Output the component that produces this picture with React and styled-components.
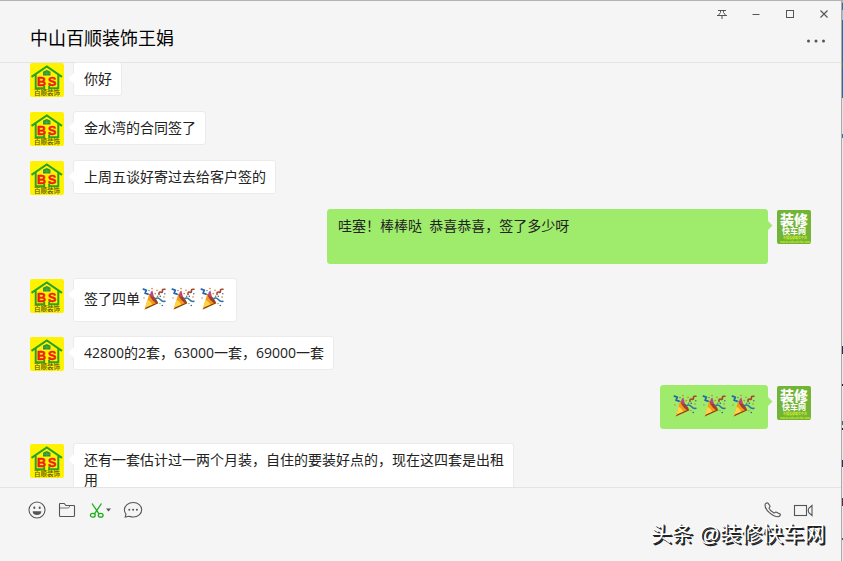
import React from 'react';
import styled, { createGlobalStyle } from 'styled-components';

const GlobalStyle = createGlobalStyle`
  * {
    box-sizing: border-box;
  }

  body {
    margin: 0;
    background: #f5f5f5;
    color: #222;
    font-family: 'Open Sans', 'Noto Sans CJK SC', sans-serif;
    font-size: 14px;
    line-height: 20px;
  }
`;

const Desktop = styled.div`
  display: flex;
  height: 100vh;
  overflow: hidden;
`;

const Window = styled.main`
  position: relative;
  flex: 1;
  min-width: 0;
  display: flex;
  flex-direction: column;
  background: #f5f5f5;
  border-top: 1px solid #b4b2b3;
  border-right: 1px solid #a9a9a9;
`;

// sliver of the window that sits behind the chat
const Behind = styled.div`
  width: 1px;
  background: linear-gradient(
    #b0b0b0 3px, #1b79b0 3px 10px, #8fc4de 10px 20px, #1273ad 20px 62px,
    #35806f 62px 68px, #1273b4 68px 98px, #e4e4e4 98px 134px,
    #1b82b0 134px 138px, #e9e9e9 138px 346px, #23305c 346px 354px,
    #e9e9e9 354px 384px, #222 384px 386px, #e9e9e9 386px 421px,
    #1f7a70 421px 425px, #e9e9e9 425px 428px, #222 428px 430px,
    #e9e9e9 430px 460px, #23305c 460px 467px, #e9e9e9 467px 498px,
    #6b2440 498px 506px, #e9e9e9 506px 538px, #1f6a60 538px 540px,
    #e9e9e9 540px
  );
`;

const Header = styled.header`
  flex: none;
  border-bottom: 1px solid #e4e4e4;
`;

const WindowControls = styled.div`
  display: flex;
  justify-content: flex-end;
`;

const IconButton = styled.button`
  display: flex;
  align-items: center;
  justify-content: center;
  width: ${(props) => props.$width || 20}px;
  height: ${(props) => props.$height || 20}px;
  padding: 0;
  border: 0;
  background: none;
  color: #555;

  svg {
    display: block;
    flex: none;
  }
`;

const TitleRow = styled.div`
  display: flex;
  align-items: flex-start;
  justify-content: space-between;
  height: 35px;
  padding: 0 8px 0 30px;
`;

const Title = styled.h1`
  margin: 0;
  color: #000;
  font-size: 18px;
  font-weight: 400;
  line-height: 22px;
`;

const Messages = styled.ul`
  flex: 1;
  min-height: 0;
  display: flex;
  flex-direction: column;
  gap: 14px;
  margin: -1px 0 0;
  padding: 0 30px;
  overflow: hidden;
  list-style: none;
`;

const Message = styled.li`
  flex: none;
  display: flex;
  flex-direction: ${(props) => (props.$mine ? 'row-reverse' : 'row')};
  align-items: flex-start;
  gap: 9px;
`;

const Avatar = styled.svg`
  flex: none;
  display: block;
  width: 34px;
  height: 34px;
  margin-top: 1px;
  border-radius: 2px;
`;

const Bubble = styled.div`
  position: relative;
  display: flex;
  align-items: flex-start;
  max-width: 441px;
  width: ${(props) => (props.$wide ? '441px' : 'auto')};
  min-height: ${(props) => (props.$wide ? 55 : 34)}px;
  padding: 6px 9px 6px 10px;
  border: 1px solid ${(props) => (props.$mine ? '#9feb6b' : '#ebebeb')};
  border-radius: 3px;
  background: ${(props) => (props.$mine ? '#9feb6b' : '#fff')};

  &::before {
    content: '';
    position: absolute;
    top: 12px;
    ${(props) => (props.$mine ? 'right' : 'left')}: -4px;
    width: 7px;
    height: 7px;
    background: inherit;
    transform: rotate(45deg);
  }
`;

const Text = styled.p`
  position: relative;
  margin: 0;
  white-space: pre-wrap;
  line-height: ${(props) => (props.$tall ? 28 : 20)}px;
`;

const Emoji = styled.svg`
  flex: none;
  display: block;
  position: relative;
  width: 29px;
  height: 30px;
`;

const Footer = styled.footer`
  flex: none;
  border-top: 1px solid #e4e4e4;
`;

const Toolbar = styled.div`
  display: flex;
  align-items: center;
  gap: 10px;
  height: 44px;
  padding: 0 28px 0 27px;
`;

const Spacer = styled.span`
  flex: 1;
`;

const MessageBox = styled.textarea`
  display: block;
  width: 100%;
  height: 29px;
  padding: 0 30px;
  border: 0;
  outline: 0;
  resize: none;
  background: transparent;
  font: inherit;
`;

const Watermark = styled.div`
  position: absolute;
  right: 16px;
  bottom: 13px;
  color: #fff;
  font-family: 'Liberation Sans', 'Noto Sans CJK SC', sans-serif;
  font-size: 21px;
  line-height: 28px;
  text-shadow: 1px 1px 0 #222, 2px 2px 0 #222;
  pointer-events: none;
`;

function HouseAvatar() {
  return (
    <Avatar viewBox="0 0 34 34" aria-hidden="true">
      <rect width="34" height="34" fill="#fff200" />
      <path
        d="M1.5 13.8 L16.8 3.4 L32 13.8 M5.7 11.5 V25.2 H14.2 V22.5 M28.3 11.5 V25.2 H19.2 V22.5"
        fill="none"
        stroke="#27a329"
        strokeWidth="2"
      />
      <path d="M13 8.8 L16.8 7 L20.5 8.8 V12.5 H13Z" fill="#2d8f3d" />
      <path d="M16.8 8 V12 M13.5 10.2 H20" stroke="#5fbd44" strokeWidth="0.6" />
      <g
        fill="#ee1c10"
        stroke="#ee1c10"
        strokeWidth="0.5"
        fontFamily="Liberation Sans, sans-serif"
        fontSize="12.5"
        fontWeight="700"
      >
        <text x="7" y="22.8">B</text>
        <text x="18" y="22.8">S</text>
      </g>
      <text x="4" y="31.8" fill="#5b5208" fontFamily="Noto Sans CJK SC, sans-serif" fontSize="6.5" fontWeight="500">
        百顺装饰
      </text>
    </Avatar>
  );
}

function TruckAvatar() {
  return (
    <Avatar viewBox="0 0 34 34" aria-hidden="true">
      <rect width="34" height="34" fill="#72b436" />
      <g fontFamily="Noto Sans CJK SC, sans-serif" fontWeight="700">
        <text x="3" y="14.8" fill="#fff" fontSize="14" fontWeight="900">装修</text>
        <text x="5" y="23.8" fill="#fff" fontSize="8">快车网</text>
        <text x="6" y="29" fill="#d3ee2f" fontSize="3">中国装修服务平台</text>
        <text x="3" y="33" fill="#c8e62c" fontSize="3">www.zxkuaiche.com</text>
      </g>
    </Avatar>
  );
}

function Popper() {
  return (
    <Emoji viewBox="0 1 29 30" role="img" aria-label="庆祝">
      <path d="M4.6 25.5 L9.4 9.8 Q14.5 12.5 18.3 19.3 Z" fill="#f39a17" />
      <path d="M4.6 25.5 L7.6 15.5 Q11.5 18 13 21.6 Z" fill="#ffd24a" />
      <path d="M9.4 9.8 Q15 11.5 18.3 19.3 Q15.8 19.6 12.8 16.4 Q9.6 13.2 9.4 9.8Z" fill="#a33d2a" />
      <path d="M4.6 25.5 L18.3 19.3 L16.4 18.9 L6 23.4Z" fill="#7a3d0b" />
      <path d="M10.5 12.6 Q9.5 8 12.4 6.6 L14 13Z" fill="#b9477f" />
      <g fill="none" strokeLinecap="round">
        <path d="M3.4 5.2 L6.2 6.2 L5.2 9.2 L8 10.2" stroke="#2565ab" strokeWidth="1.8" />
        <path d="M15 14.8 Q18 12.8 20.3 15.4 T25 17.2" stroke="#2f73a8" strokeWidth="1.5" />
        <path d="M19 10.5 Q18.6 7.2 21 8.2 Q22.8 9 22.4 6.8 Q22 5 25 5.2" stroke="#a5432f" strokeWidth="1.6" />
      </g>
      <g fill="#d08018">
        <circle cx="12" cy="4.6" r="0.8" />
        <circle cx="17" cy="6.2" r="0.8" />
        <circle cx="15.2" cy="9.6" r="0.8" />
        <circle cx="24" cy="13" r="0.8" />
        <circle cx="4" cy="14" r="0.7" />
      </g>
      <g fill="#2d5f90">
        <circle cx="9" cy="6.6" r="0.7" />
        <circle cx="20.3" cy="12.3" r="0.8" />
        <circle cx="22.3" cy="21.5" r="0.8" />
        <circle cx="24.8" cy="9.7" r="0.7" />
      </g>
      <g fill="#6a9a38">
        <circle cx="17.6" cy="12.4" r="0.8" />
        <circle cx="20" cy="19.6" r="0.7" />
      </g>
    </Emoji>
  );
}

function PinIcon() {
  return (
    <svg width="12" height="12" viewBox="0 0 12 12" fill="none" stroke="currentColor">
      <path d="M2 2.5 H10 M1 7.5 H11 M4.5 2.5 V4.5 L2.5 7.2 M7.5 2.5 V4.5 L9.5 7.2 M6 7.5 V11" />
    </svg>
  );
}

function MinimizeIcon() {
  return (
    <svg width="10" height="10" viewBox="0 0 10 10" stroke="currentColor">
      <path d="M1.5 5.5 H8.5" />
    </svg>
  );
}

function MaximizeIcon() {
  return (
    <svg width="10" height="10" viewBox="0 0 10 10" fill="none" stroke="currentColor">
      <rect x="1.5" y="1.5" width="7" height="7" />
    </svg>
  );
}

function CloseIcon() {
  return (
    <svg width="10" height="10" viewBox="0 0 10 10" stroke="currentColor" strokeWidth="1.2">
      <path d="M1.5 1.5 L8.5 8.5 M8.5 1.5 L1.5 8.5" />
    </svg>
  );
}

function MoreIcon() {
  return (
    <svg width="20" height="4" viewBox="0 0 20 4" fill="currentColor">
      <circle cx="2.5" cy="2" r="1.5" />
      <circle cx="10" cy="2" r="1.5" />
      <circle cx="17.5" cy="2" r="1.5" />
    </svg>
  );
}

function SmileIcon() {
  return (
    <svg width="18" height="18" viewBox="0 0 18 18">
      <circle cx="9" cy="9" r="8" fill="none" stroke="currentColor" strokeWidth="1.1" />
      <ellipse cx="6.3" cy="6.8" rx="1" ry="1.3" fill="currentColor" />
      <ellipse cx="11.7" cy="6.8" rx="1" ry="1.3" fill="currentColor" />
      <path d="M4.7 10.2 H13.3 A4.3 3.8 0 0 1 4.7 10.2Z" fill="currentColor" />
    </svg>
  );
}

function FolderIcon() {
  return (
    <svg width="18" height="18" viewBox="0 0 18 18" fill="none" stroke="currentColor" strokeWidth="1.1">
      <path d="M1.5 14.5 V3 Q1.5 2.5 2 2.5 H6.2 L8 4.5 H16 Q16.5 4.5 16.5 5 V14.5 Q16.5 15.5 15.5 15.5 H2.5 Q1.5 15.5 1.5 14.5Z" />
      <path d="M1.5 7 H10.5 L12 4.8" strokeWidth="0.8" />
    </svg>
  );
}

function ScissorsIcon() {
  return (
    <svg width="26" height="18" viewBox="0 0 26 18" fill="none">
      <g stroke="#1aad19" strokeWidth="1.3">
        <path d="M5 2.5 L12 12.8 M14.5 2.5 L7.5 12.8" />
        <ellipse cx="5.8" cy="14.2" rx="2.4" ry="1.9" />
        <ellipse cx="13.7" cy="14.2" rx="2.4" ry="1.9" />
      </g>
      <path d="M19 7.5 H24 L21.5 10.5Z" fill="#555" />
    </svg>
  );
}

function HistoryIcon() {
  return (
    <svg width="20" height="18" viewBox="0 0 20 18" fill="currentColor">
      <path
        d="M10.2 1.5 C15 1.5 18.7 4.6 18.7 8.7 C18.7 12.8 15 16 10.2 16 C8.8 16 7.4 15.7 6.2 15.2 L2.2 16 L3 13.2 C1.9 12 1.4 10.4 1.4 8.7 C1.4 4.6 5.4 1.5 10.2 1.5Z"
        fill="none"
        stroke="currentColor"
        strokeWidth="1.1"
      />
      <circle cx="6.3" cy="8.7" r="1" />
      <circle cx="10.1" cy="8.7" r="1" />
      <circle cx="13.9" cy="8.7" r="1" />
    </svg>
  );
}

function PhoneIcon() {
  return (
    <svg width="18" height="16" viewBox="0 0 18 16" fill="none" stroke="currentColor" strokeWidth="1.1">
      <path d="M1 3 C1 1.5 3 0.2 4 1.2 L6 4 C6.5 5 5 5.5 5 6.2 C5.5 7.8 8.5 10.2 10 11 C10.8 11.2 11 9.8 12 10 L16 12 C17.2 13 15.5 14.7 14 14.7 C9 14.7 1 8.5 1 3Z" />
    </svg>
  );
}

function VideoIcon() {
  return (
    <svg width="20" height="16" viewBox="0 0 20 16" fill="none" stroke="currentColor" strokeWidth="1.1">
      <rect x="1.5" y="3.5" width="12" height="10" />
      <path d="M19 3.5 L16 6 Q14.5 8.5 16 11 L19 13.5Z" />
    </svg>
  );
}

const messages = [
  { text: '你好' },
  { text: '金水湾的合同签了' },
  { text: '上周五谈好寄过去给客户签的' },
  { text: '哇塞！棒棒哒  恭喜恭喜，签了多少呀', mine: true, wide: true },
  { text: '签了四单', poppers: 3 },
  { text: '42800的2套，63000一套，69000一套' },
  { poppers: 3, mine: true },
  { text: '还有一套估计过一两个月装，自住的要装好点的，现在这四套是出租用' },
];

function renderMessage({ text, poppers = 0, mine, wide }, index) {
  return (
    <Message key={index} $mine={mine}>
      {mine ? <TruckAvatar /> : <HouseAvatar />}
      <Bubble $mine={mine} $wide={wide}>
        {text && <Text $tall={poppers > 0}>{text}</Text>}
        {Array.from({ length: poppers }, (_, i) => <Popper key={i} />)}
      </Bubble>
    </Message>
  );
}

function App() {
  return (
    <Desktop>
      <GlobalStyle />
      <Window>
        <Header>
          <WindowControls>
            <IconButton $width={34} $height={26} aria-label="置顶"><PinIcon /></IconButton>
            <IconButton $width={34} $height={26} aria-label="最小化"><MinimizeIcon /></IconButton>
            <IconButton $width={34} $height={26} aria-label="最大化"><MaximizeIcon /></IconButton>
            <IconButton $width={34} $height={26} aria-label="关闭"><CloseIcon /></IconButton>
          </WindowControls>
          <TitleRow>
            <Title>中山百顺装饰王娟</Title>
            <IconButton $width={34} $height={28} aria-label="聊天信息"><MoreIcon /></IconButton>
          </TitleRow>
        </Header>
        <Messages>{messages.map(renderMessage)}</Messages>
        <Footer>
          <Toolbar>
            <IconButton aria-label="表情"><SmileIcon /></IconButton>
            <IconButton aria-label="发送文件"><FolderIcon /></IconButton>
            <IconButton $width={26} aria-label="截图"><ScissorsIcon /></IconButton>
            <IconButton aria-label="聊天记录"><HistoryIcon /></IconButton>
            <Spacer />
            <IconButton aria-label="语音聊天"><PhoneIcon /></IconButton>
            <IconButton aria-label="视频聊天"><VideoIcon /></IconButton>
          </Toolbar>
          <MessageBox aria-label="输入消息" />
        </Footer>
        <Watermark>头条 @装修快车网</Watermark>
      </Window>
      <Behind />
    </Desktop>
  );
}

export default App;
